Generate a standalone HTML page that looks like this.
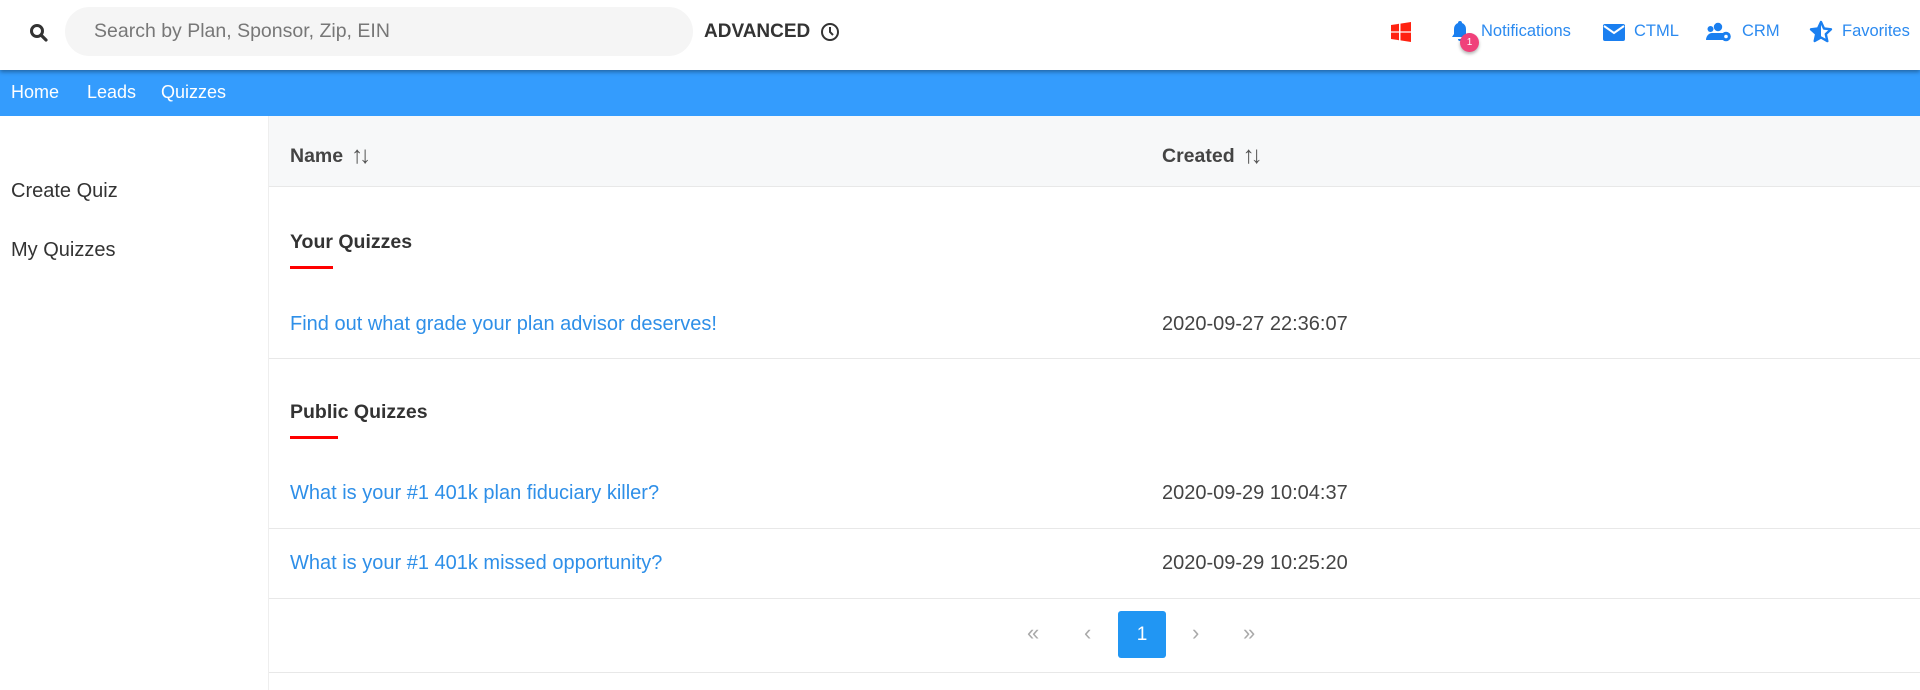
<!DOCTYPE html>
<html><head><meta charset="utf-8"><style>
*{margin:0;padding:0;box-sizing:border-box}
body{width:1920px;height:690px;overflow:hidden;background:#fff;font-family:"Liberation Sans",sans-serif;color:#333;position:relative}
.a{position:absolute;white-space:nowrap}
.top{position:absolute;left:0;top:0;width:1920px;height:70px;background:#fff;box-shadow:0 2px 4px rgba(0,0,0,.35);z-index:2}
.nav{position:absolute;left:0;top:70px;width:1920px;height:46px;background:#349cfd}
.nav span{position:absolute;top:12px;color:#fff;font-size:18px}
.side{position:absolute;left:268px;top:116px;width:1px;height:574px;background:#eee}
.hdr{position:absolute;left:269px;top:116px;width:1651px;height:71px;background:#f7f8f9;border-bottom:1px solid #e8e8e8}
.line{position:absolute;left:269px;width:1651px;height:1px;background:#e8e8e8}
.lnk{color:#2e8fe8;font-size:20px}
.dt{font-size:20px;color:#444}
.h{font-size:19.5px;font-weight:bold;color:#333}
.red{position:absolute;left:290px;height:3px;background:#f00}
.tr{color:#2b8af0;font-size:16.5px;top:22px}
.srt{font-weight:normal;color:#555;letter-spacing:-4px;margin-left:8px;font-size:24px;position:relative;top:1px}
</style></head><body>
<div class="top">
<svg class="a" style="left:29px;top:23px" width="20" height="20" viewBox="0 0 20 20"><circle cx="8" cy="8" r="5.5" fill="none" stroke="#333" stroke-width="3"/><path d="M12 12l5 5" stroke="#333" stroke-width="3.2" stroke-linecap="round"/></svg>
<div class="a" style="left:65px;top:7px;width:628px;height:49px;border-radius:25px;background:#f5f5f5"></div>
<div class="a" style="left:94px;top:20px;font-size:19.5px;color:#777">Search by Plan, Sponsor, Zip, EIN</div>
<div class="a" style="left:704px;top:21px;font-size:19px;font-weight:bold;color:#333">ADVANCED</div>
<svg class="a" style="left:820px;top:22px" width="20" height="20" viewBox="0 0 20 20"><circle cx="10" cy="10" r="8" fill="none" stroke="#333" stroke-width="2"/><path d="M10 5v5l3 3" fill="none" stroke="#333" stroke-width="2"/></svg>
<svg class="a" style="left:1391px;top:22px" width="20" height="20" viewBox="0 0 20 20"><path d="M0 3l8-1.2v7.6H0zM9.5 1.6L20 0v9.4H9.5zM0 10.6h8v7.6L0 17zM9.5 10.6H20V20l-10.5-1.6z" fill="#f21"/></svg>
<svg class="a" style="left:1450px;top:20px" width="20" height="22" viewBox="0 0 20 22"><path d="M10 1a2 2 0 0 1 2 2a6 6 0 0 1 4 6v5l2 3H2l2-3V9a6 6 0 0 1 4-6a2 2 0 0 1 2-2zM8 19h4a2 2 0 0 1-4 0z" fill="#1a7ff0"/></svg>
<div class="a" style="left:1460px;top:33px;width:19px;height:19px;border-radius:50%;background:#f0407a;color:#fff;font-size:10px;text-align:center;line-height:19px;box-shadow:0 2px 3px rgba(0,0,0,.3)">1</div>
<div class="a tr" style="left:1481px">Notifications</div>
<svg class="a" style="left:1603px;top:24px" width="22" height="17" viewBox="0 0 22 17"><rect x="0" y="0" width="22" height="17" rx="2" fill="#1a7ff0"/><path d="M1 2l10 7 10-7" fill="none" stroke="#fff" stroke-width="2"/></svg>
<div class="a tr" style="left:1634px">CTML</div>
<svg class="a" style="left:1706px;top:22px" width="26" height="21" viewBox="0 0 26 21"><circle cx="4.5" cy="7" r="3" fill="#1a7ff0"/><circle cx="12" cy="5" r="4.2" fill="#1a7ff0"/><path d="M0 18c0-4 3-7 6-7h10c2 0 3 1 3 2v5z" fill="#1a7ff0"/><circle cx="20" cy="14.5" r="4.8" fill="#1a7ff0"/><circle cx="20" cy="14.5" r="1.8" fill="#fff"/></svg>
<div class="a tr" style="left:1742px">CRM</div>
<svg class="a" style="left:1809px;top:20px" width="24" height="24" viewBox="0 0 24 24"><path d="M12 2l3 6.5 7 .8-5.2 4.8 1.5 7L12 17.5 5.7 21l1.5-7L2 9.3l7-.8z" fill="none" stroke="#1a7ff0" stroke-width="2.4" stroke-linejoin="round"/><path d="M12 2l-3 6.5-7 .8 5.2 4.8-1.5 7L12 17.5z" fill="#1a7ff0"/></svg>
<div class="a tr" style="left:1842px">Favorites</div>
</div>
<div class="nav"><span style="left:11px">Home</span><span style="left:87px">Leads</span><span style="left:161px">Quizzes</span></div>
<div class="side"></div>
<div class="a" style="left:11px;top:180px;font-size:20px">Create Quiz</div>
<div class="a" style="left:11px;top:239px;font-size:20px">My Quizzes</div>
<div class="hdr"></div>
<div class="a" style="left:290px;top:141px;font-size:19.5px;font-weight:bold;color:#444">Name<span class="srt">↑↓</span></div>
<div class="a" style="left:1162px;top:141px;font-size:19.5px;font-weight:bold;color:#444">Created<span class="srt">↑↓</span></div>
<div class="a h" style="left:290px;top:231px">Your Quizzes</div>
<div class="red" style="top:266px;width:43px"></div>
<div class="a lnk" style="left:290px;top:313px">Find out what grade your plan advisor deserves!</div>
<div class="a dt" style="left:1162px;top:313px">2020-09-27 22:36:07</div>
<div class="line" style="top:358px"></div>
<div class="a h" style="left:290px;top:401px">Public Quizzes</div>
<div class="red" style="top:436px;width:48px"></div>
<div class="a lnk" style="left:290px;top:482px">What is your #1 401k plan fiduciary killer?</div>
<div class="a dt" style="left:1162px;top:482px">2020-09-29 10:04:37</div>
<div class="line" style="top:528px"></div>
<div class="a lnk" style="left:290px;top:552px">What is your #1 401k missed opportunity?</div>
<div class="a dt" style="left:1162px;top:552px">2020-09-29 10:25:20</div>
<div class="line" style="top:598px"></div>
<div class="a" style="left:1027px;top:620px;font-size:22px;color:#aaa">«</div>
<div class="a" style="left:1084px;top:620px;font-size:22px;color:#aaa">‹</div>
<div class="a" style="left:1118px;top:611px;width:48px;height:47px;background:#2196f3;border-radius:3px;color:#fff;font-size:19px;text-align:center;line-height:47px">1</div>
<div class="a" style="left:1192px;top:620px;font-size:22px;color:#aaa">›</div>
<div class="a" style="left:1243px;top:620px;font-size:22px;color:#aaa">»</div>
<div class="line" style="top:672px"></div>
</body></html>
